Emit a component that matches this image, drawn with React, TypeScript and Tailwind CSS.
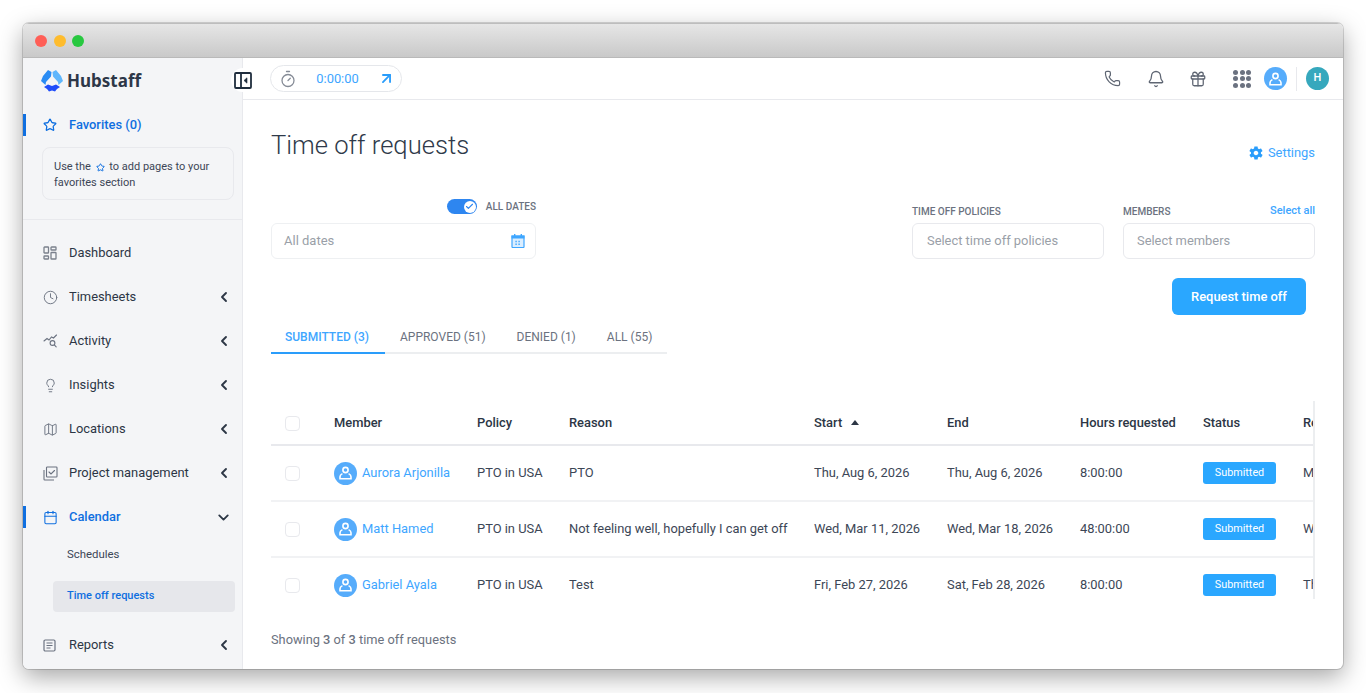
import { ArrowUpRight, Bell, Calendar, Check, ChevronDown, ChevronLeft, Clock, Gift, Lightbulb, Map, Phone, Star, Timer } from 'lucide-react';
import { IoMdSettings } from 'react-icons/io';
import type { ReactNode } from 'react';

function DashboardIcon() {
  return (
    <svg width="14" height="14" viewBox="0 0 14 14" fill="none" stroke="#7a808c" strokeWidth="1.3">
      <rect x="1" y="1" width="4.5" height="6" rx="0.6" />
      <rect x="8" y="1" width="5" height="3" rx="0.6" />
      <rect x="1" y="10" width="4.5" height="3" rx="0.6" />
      <rect x="8" y="6.5" width="5" height="6.5" rx="0.6" />
    </svg>
  );
}

function ActivityIcon() {
  return (
    <svg width="15" height="14" viewBox="0 0 15 14" fill="none" stroke="#6b7280" strokeWidth="1.1" strokeLinecap="round">
      <path d="M1 7l3-2.5 2 1.5 2.5-3 2 1 3-3" />
      <circle cx="9.5" cy="9" r="2.4" />
      <path d="M11.3 10.8L13.2 12.8" />
    </svg>
  );
}

function ProjectIcon() {
  return (
    <svg width="15" height="15" viewBox="0 0 15 15" fill="none" stroke="#6b7280" strokeWidth="1.1">
      <rect x="3.5" y="1" width="10.5" height="10" rx="0.8" />
      <path d="M1 4v9.2c0 .5.3.8.8.8H11" />
      <path d="M6 6l2 2 3.5-3.5" strokeLinecap="round" />
    </svg>
  );
}

function ReportsIcon() {
  return (
    <svg width="13" height="13" viewBox="0 0 13 13" fill="none" stroke="#6b7280" strokeWidth="1.2">
      <rect x="1" y="1" width="11" height="11" rx="1.2" />
      <path d="M3.5 4h6M3.5 6.5h6M3.5 9h4" />
    </svg>
  );
}

function UserAvatar() {
  return (
    <span className="flex h-[23px] w-[23px] shrink-0 items-center justify-center rounded-full bg-[#56acfb]">
      <svg width="13" height="14" viewBox="0 0 13 14" fill="none" stroke="white" strokeWidth="1.6">
        <circle cx="6.5" cy="4" r="2.6" />
        <path d="M3.4 7.6C1.9 8.3 1 9.3 1 10.8V12.8H12V10.8C12 9.3 11.1 8.3 9.6 7.6" />
      </svg>
    </span>
  );
}

function HubstaffLogo() {
  return (
    <svg width="22" height="22" viewBox="0 0 22 22">
      <path d="M7 0L10.5 2 10 6.5 5 12 4.5 15 0 11 2 6z" fill="#2a8cf4" />
      <path d="M15 0L11.5 2 12 6.5 17 12 17.5 15 22 11 20 6z" fill="#5fb6fc" />
      <path d="M3 17L7 14.5 11 16 15 14.5 19 17 16 19 14 21.5 11 20.5 8 21.5 6 19z" fill="#1f4dfa" />
    </svg>
  );
}

function NavItem({ icon, label, chevron = true }: { icon: ReactNode; label: string; chevron?: boolean }) {
  return (
    <div className="flex h-[44px] items-center pl-[20px] pr-[10px]">
      <span className="flex w-[26px] justify-start">{icon}</span>
      <span className="flex-1 text-[12.9px] text-[#2c3645]">{label}</span>
      {chevron && <ChevronLeft size={16} strokeWidth={2.8} className="text-[#2c3645]" />}
    </div>
  );
}

const iconGray = 'text-[#6b7280]';

const rows = [
  { name: 'Aurora Arjonilla', reason: 'PTO', start: 'Thu, Aug 6, 2026', end: 'Thu, Aug 6, 2026', hours: '8:00:00', extra: 'Mon' },
  { name: 'Matt Hamed', reason: 'Not feeling well, hopefully I can get off', start: 'Wed, Mar 11, 2026', end: 'Wed, Mar 18, 2026', hours: '48:00:00', extra: 'Wed' },
  { name: 'Gabriel Ayala', reason: 'Test', start: 'Fri, Feb 27, 2026', end: 'Sat, Feb 28, 2026', hours: '8:00:00', extra: 'Thu' },
];

function Sidebar() {
  return (
    <aside className="flex w-[220px] shrink-0 flex-col border-r border-[#e8e9ed] bg-[#f4f5f7]">
      <div className="flex h-[46px] items-center gap-[4px] pl-[18px]">
        <HubstaffLogo />
        <span className="text-[17px] font-bold text-[#2d3748] [font-family:'Noto_Sans',sans-serif]">Hubstaff</span>
      </div>
      <div className="mt-[10px] flex h-[22px] items-center border-l-[3px] border-[#0f6fe0] pl-[17px]">
        <Star size={14} strokeWidth={2.2} className="mr-[12px] text-[#0f6fe0]" />
        <span className="text-[12.9px] font-medium text-[#0f6fe0]">Favorites (0)</span>
      </div>
      <div className="ml-[19px] mr-[8px] mt-[11px] h-[53px] rounded-lg border border-[#e8e9ed] px-[11px] py-[11px] text-[11px] leading-[15.5px] text-[#3c4656]">
        Use the <Star size={9} strokeWidth={2.6} className="mx-[2px] inline text-[#0f6fe0]" /> to add pages to your favorites section
      </div>
      <div className="mt-[19px] border-t border-[#e8e9ed] pt-[11px]">
        <NavItem icon={<DashboardIcon />} label="Dashboard" chevron={false} />
        <NavItem icon={<Clock size={15} strokeWidth={1.5} className={iconGray} />} label="Timesheets" />
        <NavItem icon={<ActivityIcon />} label="Activity" />
        <NavItem icon={<Lightbulb size={15} strokeWidth={1.5} className={iconGray} />} label="Insights" />
        <NavItem icon={<Map size={15} strokeWidth={1.5} className={iconGray} />} label="Locations" />
        <NavItem icon={<ProjectIcon />} label="Project management" />
        <div className="flex h-[44px] items-center">
          <div className="flex h-[22px] w-full items-center border-l-[3px] border-[#0f6fe0] pl-[17px] pr-[10px]">
            <Calendar size={15} strokeWidth={1.7} className="mr-[11px] text-[#0f6fe0]" />
            <span className="flex-1 text-[12.9px] font-medium text-[#0f6fe0]">Calendar</span>
            <ChevronDown size={17} strokeWidth={2.6} className="text-[#2c3645]" />
          </div>
        </div>
        <div className="flex h-[31px] items-center pl-[44px] text-[11.4px] text-[#3c4656]">Schedules</div>
        <div className="ml-[30px] mr-[7px] mt-[11px] flex h-[31px] items-center rounded bg-[#e6e7eb] pl-[14px] text-[11px] font-medium text-[#0f6fe0]">
          Time off requests
        </div>
        <div className="mt-[11px]">
          <NavItem icon={<ReportsIcon />} label="Reports" />
        </div>
      </div>
    </aside>
  );
}

function TopBar() {
  return (
    <header className="flex h-[42px] shrink-0 items-center border-b border-[#e8e9ed] pl-[27px] pr-[14px]">
      <div className="flex h-[27px] w-[132px] items-center rounded-full border border-[#e5e7eb] pl-[8px] pr-[6px]">
        <Timer size={18} strokeWidth={1.7} className="text-[#858b96]" />
        <span className="flex-1 text-center text-[12.9px] text-[#3ea6ff]">0:00:00</span>
        <ArrowUpRight size={17} strokeWidth={2.6} className="text-[#2a9dfb]" />
      </div>
      <div className="ml-auto flex items-center">
        <Phone size={17} strokeWidth={1.7} className="mr-[26px] text-[#5f6673]" />
        <Bell size={18} strokeWidth={1.7} className="mr-[24px] text-[#5f6673]" />
        <Gift size={18} strokeWidth={1.7} className="mr-[26px] text-[#5f6673]" />
        <div className="mr-[13px] grid grid-cols-3 gap-[1.5px]">
          {Array.from({ length: 9 }).map((_, i) => (
            <span key={i} className="h-[5px] w-[5px] rounded-full bg-[#6b7280]" />
          ))}
        </div>
        <UserAvatar />
        <span className="mx-[9px] h-[24px] w-px bg-[#e8e9ed]" />
        <span className="flex h-[23px] w-[23px] items-center justify-center rounded-full bg-[#36a8bd] text-[11px] font-medium text-white">H</span>
      </div>
    </header>
  );
}

function Filters() {
  return (
    <div className="mt-[36px] flex items-start justify-between">
      <div className="w-[265px]">
        <div className="flex h-[15px] items-center justify-end">
          <span className="relative mr-[9px] h-[15px] w-[30px] rounded-full bg-[#2e86f0]">
            <span className="absolute right-[1px] top-[1.5px] flex h-[12px] w-[12px] items-center justify-center rounded-full bg-white">
              <Check size={9} strokeWidth={3} className="text-[#2e86f0]" />
            </span>
          </span>
          <span className="text-[10px] font-medium text-[#6b7280]">ALL DATES</span>
        </div>
        <div className="mt-[9px] flex h-[36px] items-center rounded-md border border-[#eef0f2] pl-[12px] pr-[10px] text-[13px] text-[#9a9fa8]">
          <span className="flex-1">All dates</span>
          <svg width="14" height="14" viewBox="0 0 14 14">
            <path d="M1 2.2h12v10.6a.7.7 0 0 1-.7.7H1.7a.7.7 0 0 1-.7-.7z" fill="#dbeeff" stroke="#3ea6ff" strokeWidth="1.2" />
            <path d="M0.5 1.6h13v3H0.5z" fill="#3ea6ff" />
            <rect x="3" y="0" width="1.4" height="2.5" fill="#3ea6ff" />
            <rect x="9.6" y="0" width="1.4" height="2.5" fill="#3ea6ff" />
            <path d="M4.4 6.8h1.4v1.4H4.4zM7.4 6.8h1.4v1.4H7.4zM4.4 9.6h1.4V11H4.4zM7.4 9.6h1.4V11H7.4z" fill="#3ea6ff" />
          </svg>
        </div>
      </div>
      <div className="flex gap-[19px] pt-[5px]">
        <div className="w-[192px]">
          <div className="flex h-[14px] items-center text-[10px] font-medium text-[#6b7280]">TIME OFF POLICIES</div>
          <div className="mt-[5px] flex h-[36px] items-center rounded-md border border-[#e8e9ed] pl-[14px] text-[12.9px] text-[#9a9fa8]">Select time off policies</div>
        </div>
        <div className="w-[192px]">
          <div className="flex h-[14px] items-center justify-between text-[10px] font-medium text-[#6b7280]">
            MEMBERS
            <span className="text-[11px] text-[#3ea6ff]">Select all</span>
          </div>
          <div className="mt-[5px] flex h-[36px] items-center rounded-md border border-[#e8e9ed] pl-[13px] text-[12.9px] text-[#9a9fa8]">Select members</div>
        </div>
      </div>
    </div>
  );
}

function Tabs() {
  return (
    <div className="mt-[1px] flex h-[38px] w-[396px] items-end whitespace-nowrap border-b-2 border-[#eceef0] pb-[5px] text-[12px] leading-[20px]">
      <div className="-mb-[7px] h-[27px] w-[114px] border-b-2 border-[#2a9dfb] pl-[14px] font-medium text-[#3ea6ff]">SUBMITTED (3)</div>
      <div className="pl-[15px] text-[#6b7280]">APPROVED (51)</div>
      <div className="pl-[31px] text-[#6b7280]">DENIED (1)</div>
      <div className="pl-[31px] text-[#6b7280]">ALL (55)</div>
    </div>
  );
}

function CheckBox() {
  return <span className="block h-[15px] w-[15px] rounded border border-[#e8e9ed] bg-white" />;
}

function RequestsTable() {
  return (
    <div className="mt-[47px] h-[198px] w-[1044px] overflow-hidden border-r-2 border-[#eceef0]">
      <table className="w-[1132px] table-fixed border-collapse text-left text-[12.9px]">
        <colgroup>
          <col className="w-[63px]" />
          <col className="w-[143px]" />
          <col className="w-[92px]" />
          <col className="w-[245px]" />
          <col className="w-[133px]" />
          <col className="w-[133px]" />
          <col className="w-[123px]" />
          <col className="w-[100px]" />
          <col className="w-[100px]" />
        </colgroup>
        <thead>
          <tr className="h-[44px] border-b-2 border-[#e8e9ed] font-medium text-[#2c3645]">
            <th className="pl-[14px] pt-[2px]"><CheckBox /></th>
            <th className="font-medium">Member</th>
            <th className="font-medium">Policy</th>
            <th className="font-medium">Reason</th>
            <th className="font-medium">
              Start
              <span className="ml-[9px] inline-block h-0 w-0 border-x-[4px] border-b-[5px] border-x-transparent border-b-[#2c3645] align-[2px]" />
            </th>
            <th className="font-medium">End</th>
            <th className="font-medium">Hours requested</th>
            <th className="font-medium">Status</th>
            <th className="font-medium">Requested</th>
          </tr>
        </thead>
        <tbody className="text-[#3c4656]">
          {rows.map((r) => (
            <tr key={r.name} className="h-[56px] border-b-2 border-[#f1f2f4]">
              <td className="pl-[14px]"><CheckBox /></td>
              <td>
                <span className="flex items-center gap-[5px] text-[#3ea6ff]">
                  <UserAvatar />
                  {r.name}
                </span>
              </td>
              <td>PTO in USA</td>
              <td>{r.reason}</td>
              <td>{r.start}</td>
              <td>{r.end}</td>
              <td>{r.hours}</td>
              <td>
                <span className="flex h-[22px] w-[73px] items-center justify-center rounded-[3px] bg-[#2aa7ff] text-[10.8px] text-white">Submitted</span>
              </td>
              <td>{r.extra}</td>
            </tr>
          ))}
        </tbody>
      </table>
    </div>
  );
}

export default function App() {
  return (
    <div className="h-[693px] w-[1366px] overflow-hidden bg-white pl-[23px] pt-[23px] font-['Roboto',sans-serif]">
      <div className="flex h-[646px] w-[1320px] flex-col overflow-hidden rounded-[6px] bg-white shadow-[0_0_0_1px_rgba(0,0,0,0.15),0_8px_24px_rgba(0,0,0,0.35)]">
        <div className="flex h-[35px] shrink-0 items-center gap-[6.5px] border-y border-t-[#bdbdbd] border-b-[#b9b9b9] bg-gradient-to-b from-[#e6e6e6] to-[#c9c9c9] pl-[12px]">
          <span className="h-[12px] w-[12px] rounded-full bg-[#ff5f57]" />
          <span className="h-[12px] w-[12px] rounded-full bg-[#febc2e]" />
          <span className="h-[12px] w-[12px] rounded-full bg-[#28c840]" />
        </div>
        <div className="relative flex min-h-0 flex-1">
          <Sidebar />
          <span className="absolute left-[208px] top-[10px] flex h-[24px] w-[24px] items-center justify-center rounded-full bg-white">
            <svg width="18" height="17" viewBox="0 0 18 17" fill="none" stroke="#1f2d3d" strokeWidth="1.8">
              <rect x="1" y="1" width="16" height="15" rx="1" />
              <path d="M7 1v15" />
              <path d="M13 5.8v5.4L10 8.5z" fill="#1f2d3d" strokeWidth="0.6" />
            </svg>
          </span>
          <main className="flex min-w-0 flex-1 flex-col">
            <TopBar />
            <div className="flex flex-1 flex-col pl-[28px] pr-[28px]">
              <div className="mt-[27px] flex h-[36px] items-start justify-between">
                <h1 className="text-[25.6px] font-light leading-[36px] text-[#2f3a4a]">Time off requests</h1>
                <div className="mt-[16px] flex items-center gap-[4px] text-[12.9px] text-[#3ea6ff]">
                  <IoMdSettings size={16} className="text-[#2a9dfb]" />
                  Settings
                </div>
              </div>
              <Filters />
              <div className="mt-[19px] flex justify-end pr-[9px]">
                <button className="h-[37px] w-[134px] rounded-md bg-[#2aa7ff] text-[12.9px] font-medium text-white">Request time off</button>
              </div>
              <Tabs />
              <RequestsTable />
              <p className="mt-[31px] text-[12.8px] text-[#6b7280]">
                Showing <span className="font-medium">3</span> of <span className="font-medium">3</span> time off requests
              </p>
            </div>
          </main>
        </div>
      </div>
    </div>
  );
}
